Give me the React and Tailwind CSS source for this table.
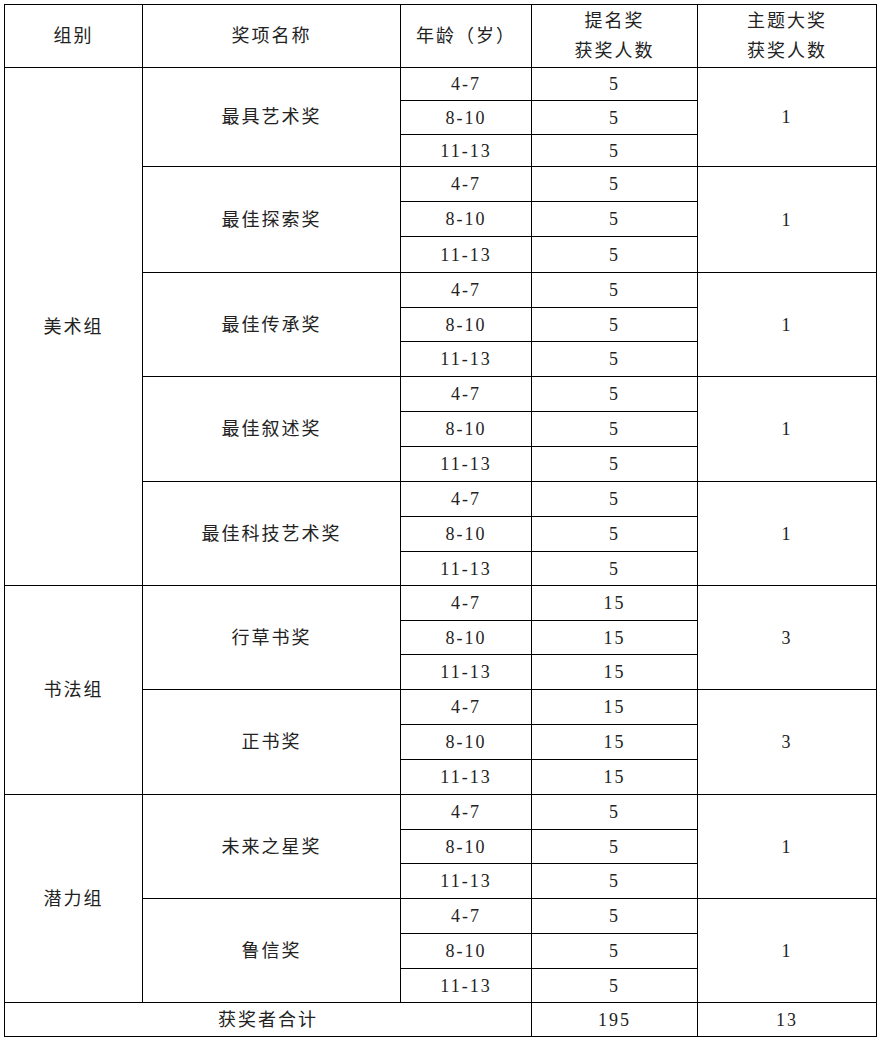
import React from "react";

const groups = [
  {
    name: "美术组",
    awards: [
      { name: "最具艺术奖", n: "5", g: "1" },
      { name: "最佳探索奖", n: "5", g: "1" },
      { name: "最佳传承奖", n: "5", g: "1" },
      { name: "最佳叙述奖", n: "5", g: "1" },
      { name: "最佳科技艺术奖", n: "5", g: "1" },
    ],
  },
  {
    name: "书法组",
    awards: [
      { name: "行草书奖", n: "15", g: "3" },
      { name: "正书奖", n: "15", g: "3" },
    ],
  },
  {
    name: "潜力组",
    awards: [
      { name: "未来之星奖", n: "5", g: "1" },
      { name: "鲁信奖", n: "5", g: "1" },
    ],
  },
];

const heights = [
  33, 34, 32, 35, 35, 36, 35, 34, 35, 35, 35, 35, 35, 35, 34, 35, 34, 35, 35, 35,
  35, 35, 34, 35, 35, 35, 34,
];

const ages = ["4-7", "8-10", "11-13"];
const td = "border border-black text-center align-middle p-0";

export default function App() {
  let idx = 0;
  const rows = [];
  groups.forEach((grp, gi) => {
    const groupRows = grp.awards.length * 3;
    grp.awards.forEach((a, ai) => {
      ages.forEach((age, k) => {
        const h = heights[idx];
        idx++;
        rows.push(
          <tr key={`${gi}-${ai}-${k}`} style={{ height: h }}>
            {ai === 0 && k === 0 && (
              <td rowSpan={groupRows} className={td}>
                {grp.name}
              </td>
            )}
            {k === 0 && (
              <td rowSpan={3} className={td}>
                {a.name}
              </td>
            )}
            <td className={td}>{age}</td>
            <td className={td}>{a.n}</td>
            {k === 0 && (
              <td rowSpan={3} className={td}>
                {a.g}
              </td>
            )}
          </tr>
        );
      });
    });
  });

  return (
    <div className="bg-white w-[879px] h-[1040px] pt-[4px] pl-[4px]">
      <table
        className="border-collapse table-fixed w-[872px] text-[18px] tracking-[2px] text-[#222] leading-[30px]"
        style={{ fontFamily: '"Liberation Serif", "Noto Sans CJK SC", serif' }}
      >
        <colgroup>
          <col className="w-[138px]" />
          <col className="w-[258px]" />
          <col className="w-[131px]" />
          <col className="w-[166px]" />
          <col className="w-[179px]" />
        </colgroup>
        <tbody>
          <tr className="h-[63px]">
            <td className={td}>组别</td>
            <td className={td}>奖项名称</td>
            <td className={td}>年龄（岁）</td>
            <td className={td}>
              提名奖
              <br />
              获奖人数
            </td>
            <td className={td}>
              主题大奖
              <br />
              获奖人数
            </td>
          </tr>
          {rows}
          <tr className="h-[34px]">
            <td colSpan={3} className={td}>
              获奖者合计
            </td>
            <td className={td}>195</td>
            <td className={td}>13</td>
          </tr>
        </tbody>
      </table>
    </div>
  );
}
